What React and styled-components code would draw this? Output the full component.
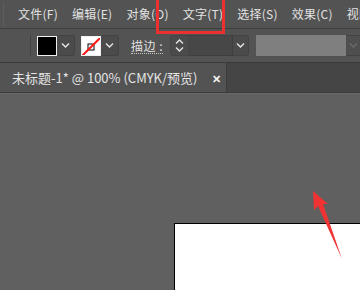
import styled, { createGlobalStyle } from "styled-components";

const Global = createGlobalStyle`
  html, body {
    margin: 0;
    padding: 0;
    background: #606060;
  }
  body {
    font-family: "Noto Sans CJK SC", "Noto Sans", sans-serif;
    overflow: hidden;
  }
`;

const Screen = styled.div`
  position: relative;
  width: 360px;
  height: 290px;
  overflow: hidden;
  display: flex;
  flex-direction: column;
  background: #606060;
`;

// menu
const MenuBar = styled.div`
  height: 28px;
  display: flex;
  align-items: center;
  background: #535353;
  border-bottom: 1px solid #3d3d3d;
  padding-left: 3px;
  flex-shrink: 0;
`;
const Grip = styled.div`
  width: 1px;
  height: ${(p) => p.h ?? 24}px;
  background: ${(p) => p.c || "#5e5e5e"};
  margin-right: ${(p) => p.mr ?? 7}px;
  flex-shrink: 0;
`;
const MenuItem = styled.div`
  padding: 0 7px;
  font-size: 12px;
  letter-spacing: 0.25px;
  line-height: 28px;
  color: #e2e2e2;
  white-space: nowrap;
`;
const Highlight = styled.div`
  position: absolute;
  left: 156px;
  top: -4px;
  width: 63px;
  height: 32px;
  border: 3px solid #ec2f2f;
`;

// toolbar
const ToolBar = styled.div`
  height: 33px;
  display: flex;
  align-items: center;
  background: #535353;
  border-bottom: 1px solid #3a3a3a;
  padding-left: 30px;
  flex-shrink: 0;
`;
const Swatch = styled.div`
  width: 18px;
  height: 18px;
  border: 1px solid #f0f0f0;
  background: ${(p) => p.bg};
  margin-left: ${(p) => p.ml}px;
  position: relative;
  overflow: hidden;
  flex-shrink: 0;
`;
const DropBtn = styled.div`
  width: ${(p) => p.w || 17}px;
  height: 19px;
  flex-shrink: 0;
  display: flex;
  align-items: center;
  justify-content: center;
  background: ${(p) => p.bg || "#4b4b4b"};
  border: 1px solid #434343;
  border-left: none;
  border-radius: 0 3px 3px 0;
  color: ${(p) => p.fg || "#e6e6e6"};
`;
const Label = styled.div`
  margin-left: 12px;
  font-size: 12px;
  color: #e0e0e0;
  border-bottom: 1px dotted #c8c8c8;
  line-height: 15px;
  letter-spacing: 0.5px;
  white-space: nowrap;
  flex-shrink: 0;
`;
const Spinner = styled.div`
  margin-left: 7px;
  width: 17px;
  height: 19px;
  flex-shrink: 0;
  border: 1px solid #454545;
  border-radius: 3px 0 0 3px;
  background: #4b4b4b;
  display: flex;
  flex-direction: column;
  align-items: center;
  justify-content: center;
  gap: 3px;
  color: #e6e6e6;
`;
const Field = styled.div`
  width: 43px;
  height: 19px;
  flex-shrink: 0;
  background: #474747;
  border: 1px solid #3f3f3f;
  border-left: none;
`;
const GreyBox = styled.div`
  margin-left: 7px;
  width: 90px;
  height: 21px;
  flex-shrink: 0;
  background: #7f7f7f;
`;

// tabs
const TabBar = styled.div`
  height: 29px;
  display: flex;
  background: #454545;
  border-bottom: 1px solid #3a3a3a;
  flex-shrink: 0;
`;
const Tab = styled.div`
  width: 227px;
  display: flex;
  align-items: center;
  justify-content: space-between;
  padding: 0 5px 0 12px;
  box-sizing: border-box;
  background: #535353;
  border-right: 1px solid #3c3c3c;
  font-size: 13px;
  color: #e4e4e4;
  white-space: nowrap;
`;
const Close = styled.span`
  font-size: 11px;
  font-weight: bold;
  color: #f2f2f2;
`;

// canvas
const Canvas = styled.div`
  flex: 1;
  background: #606060;
  border-top: 1px solid #6a6a6a;
  padding: 129px 0 0 174px;
`;
const Artboard = styled.div`
  height: 100%;
  background: #ffffff;
  border-top: 1px solid #000;
  border-left: 1px solid #000;
`;
const Arrow = styled.svg`
  position: absolute;
  left: 0;
  top: 0;
`;

const Chevron = ({ up }) => (
  <svg width="9" height="5" viewBox="0 0 9 5" style={{ display: "block" }}>
    <path
      d={up ? "M1 4.5 L4.5 1 L8 4.5" : "M1 0.5 L4.5 4 L8 0.5"}
      fill="none"
      stroke="currentColor"
      strokeWidth="1.4"
    />
  </svg>
);

const menus = ["文件(F)", "编辑(E)", "对象(O)", "文字(T)", "选择(S)", "效果(C)", "视图(V)"];

export default function App() {
  return (
    <Screen>
      <Global />
      <MenuBar>
        <Grip />
        {menus.map((m) => (
          <MenuItem key={m}>{m}</MenuItem>
        ))}
      </MenuBar>
      <ToolBar>
        <Grip h={21} c="#434343" mr={0} />
        <Swatch bg="#000" ml={6} />
        <DropBtn>
          <Chevron />
        </DropBtn>
        <Swatch bg="#fff" ml={6}>
          <svg width="18" height="18" viewBox="0 0 18 18">
            <rect x="6" y="6" width="6" height="6" fill="none" stroke="#000" strokeWidth="1" />
            <line x1="0" y1="18" x2="18" y2="0" stroke="#ff1a1a" strokeWidth="2" />
          </svg>
        </Swatch>
        <DropBtn>
          <Chevron />
        </DropBtn>
        <Label>描边 :</Label>
        <Spinner>
          <Chevron up />
          <Chevron />
        </Spinner>
        <Field />
        <DropBtn w={15}>
          <Chevron />
        </DropBtn>
        <GreyBox />
        <DropBtn w={15} bg="#4f4f4f" fg="#6c6c6c">
          <Chevron />
        </DropBtn>
      </ToolBar>
      <TabBar>
        <Tab>
          <span>未标题-1* @ 100% (CMYK/预览)</span>
          <Close>✕</Close>
        </Tab>
      </TabBar>
      <Canvas>
        <Artboard />
      </Canvas>
      <Highlight />
      <Arrow width="360" height="290" viewBox="0 0 360 290">
        <polygon
          points="313,191 328,204 323,204 342,259 318,206 314,210"
          fill="#f03232"
        />
      </Arrow>
    </Screen>
  );
}
